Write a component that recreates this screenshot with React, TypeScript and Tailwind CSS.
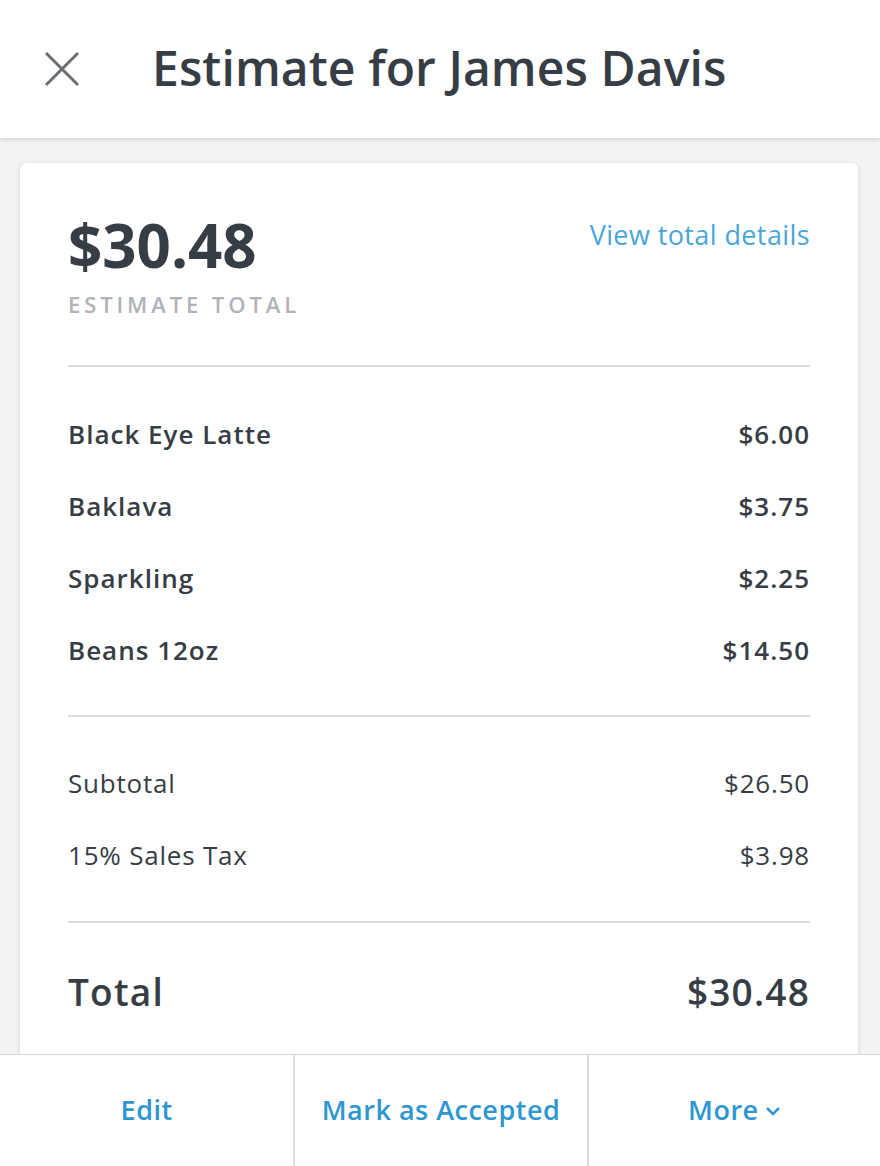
const items = [
  { name: "Black Eye Latte", price: "$6.00" },
  { name: "Baklava", price: "$3.75" },
  { name: "Sparkling", price: "$2.25" },
  { name: "Beans 12oz", price: "$14.50" },
];

export default function App() {
  return (
    <div className="h-[1166px] w-[880px] flex flex-col bg-[#f2f3f5] font-['Open_Sans',sans-serif] text-[#373d45] overflow-hidden">
      {/* header */}
      <header className="h-[138px] shrink-0 bg-white flex items-center shadow-[0_2px_4px_rgba(0,0,0,0.12)] z-10">
        <button className="ml-[44px] w-[36px] h-[36px] flex items-center justify-center">
          <svg width="36" height="36" viewBox="0 0 36 36" fill="none" stroke="#6b6e72" strokeWidth="3">
            <path d="M2 2 L34 34 M34 2 L2 34" />
          </svg>
        </button>
        <h1 className="ml-[72px] mb-[3px] text-[48px] leading-none font-semibold tracking-[0.1px]">
          Estimate for James Davis
        </h1>
      </header>

      {/* body */}
      <main className="flex-1 overflow-hidden pt-[25px] pl-[20px] pr-[22px]">
        <div className="bg-white rounded-[6px] shadow-[0_1px_4px_rgba(0,0,0,0.15)] px-[48px] pt-[52px] pb-[60px]">
          <div className="flex justify-between items-start">
            <div>
              <div className="text-[60px] leading-[60px] font-bold">$30.48</div>
              <div className="mt-[18px] text-[22px] leading-[22px] font-semibold tracking-[3.9px] text-[#b0b3b8]">
                ESTIMATE TOTAL
              </div>
            </div>
            <a className="mt-[6px] text-[27px] leading-[27px] tracking-[0.4px] text-[#4aa6d8]">View total details</a>
          </div>

          <div className="h-[2px] bg-[#d9dcdf] mt-[50px]" />

          <div className="pt-[50px] pb-[48px] flex flex-col gap-[38px]">
            {items.map((it) => (
              <div key={it.name} className="flex justify-between text-[26px] leading-[34px] font-semibold tracking-[1px]">
                <span>{it.name}</span>
                <span>{it.price}</span>
              </div>
            ))}
          </div>

          <div className="h-[2px] bg-[#d9dcdf]" />

          <div className="pt-[49px] pb-[49px] flex flex-col gap-[38px] text-[26px] leading-[34px] tracking-[0.8px]">
            <div className="flex justify-between">
              <span>Subtotal</span>
              <span>$26.50</span>
            </div>
            <div className="flex justify-between">
              <span>15% Sales Tax</span>
              <span>$3.98</span>
            </div>
          </div>

          <div className="h-[2px] bg-[#d9dcdf]" />

          <div className="mt-[44px] flex justify-between text-[37px] leading-[50px] font-semibold tracking-[1.2px]">
            <span>Total</span>
            <span>$30.48</span>
          </div>
        </div>
      </main>

      {/* footer actions */}
      <footer className="h-[112px] shrink-0 bg-white border-t border-[#d3d6d9] grid grid-cols-3 text-[27px] font-semibold tracking-[0.5px] text-[#2e96d0]">
        <button className="flex items-center justify-center">Edit</button>
        <button className="flex items-center justify-center border-l-2 border-[#dcdee0]">Mark as Accepted</button>
        <button className="flex items-center justify-center gap-[6px] border-l-2 border-[#dcdee0]">
          More
          <svg width="16" height="12" viewBox="0 0 16 12" fill="none" stroke="#2e96d0" strokeWidth="2.5">
            <path d="M2 3 L8 9 L14 3" />
          </svg>
        </button>
      </footer>
    </div>
  );
}
